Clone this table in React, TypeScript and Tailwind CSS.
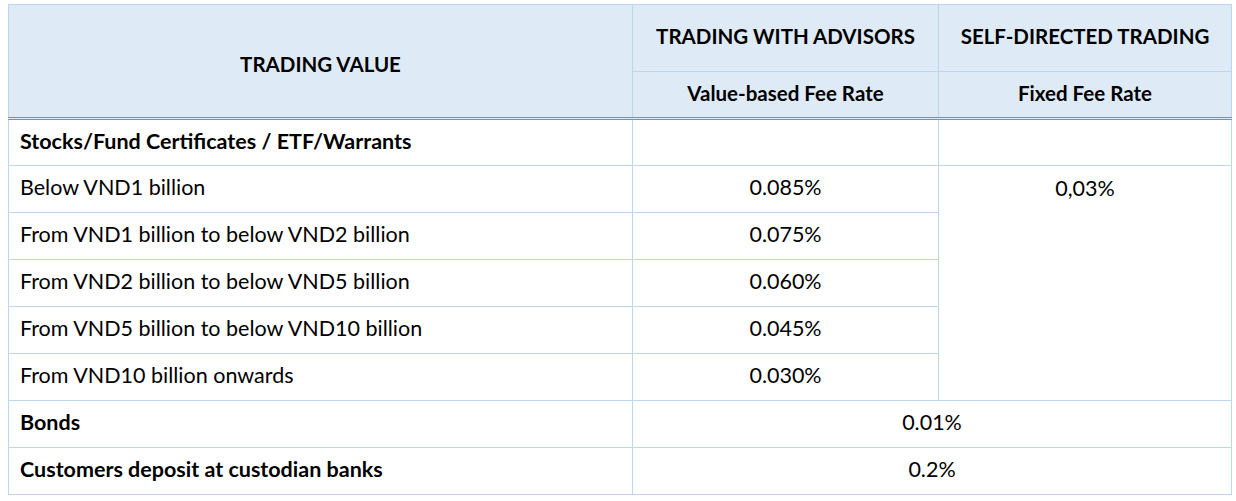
import React from "react";

const rates = [
  { label: "Below VND1 billion", value: "0.085%" },
  { label: "From VND1 billion to below VND2 billion", value: "0.075%" },
  { label: "From VND2 billion to below VND5 billion", value: "0.060%" },
  { label: "From VND5 billion to below VND10 billion", value: "0.045%" },
  { label: "From VND10 billion onwards", value: "0.030%" },
];

const cell = "border border-[#bdd6ee] h-[47px] align-middle pb-[3px]";

const App: React.FC = () => {
  return (
    <div
      className="bg-white w-[1236px] h-[501px] pt-[4px] pl-[8px] text-[21.5px] text-black"
      style={{ fontFamily: "Lato, 'Open Sans', sans-serif" }}
    >
      <table className="border-collapse w-[1223px] table-fixed">
        <colgroup>
          <col className="w-[624px]" />
          <col className="w-[306px]" />
          <col className="w-[293px]" />
        </colgroup>
        <thead className="bg-[#deeaf6] text-[20.5px]">
          <tr>
            <th
              rowSpan={2}
              className="border border-double border-[#bdd6ee] border-b-[3px] border-b-[#5b9bd5] text-center font-bold pt-[6px]"
            >
              TRADING VALUE
            </th>
            <th className="border border-[#bdd6ee] h-[67px] text-center font-bold pb-[4px]">
              TRADING WITH ADVISORS
            </th>
            <th className="border border-[#bdd6ee] h-[67px] text-center font-bold pb-[4px]">
              SELF-DIRECTED TRADING
            </th>
          </tr>
          <tr>
            <th className="border border-double border-[#bdd6ee] border-b-[3px] border-b-[#5b9bd5] h-[47px] text-center font-bold pb-[3px]">
              Value-based Fee Rate
            </th>
            <th className="border border-double border-[#bdd6ee] border-b-[3px] border-b-[#5b9bd5] h-[47px] text-center font-bold pb-[3px]">
              Fixed Fee Rate
            </th>
          </tr>
        </thead>
        <tbody>
          <tr>
            <td className={`${cell} pl-[11px] font-bold`}>Stocks/Fund Certificates / ETF/Warrants</td>
            <td className={cell}></td>
            <td className={cell}></td>
          </tr>
          {rates.map((r, i) => (
            <tr key={r.label}>
              <td className={`${cell} pl-[11px]`}>{r.label}</td>
              <td className={`${cell} text-center`}>{r.value}</td>
              {i === 0 && (
                <td rowSpan={5} className="border border-[#bdd6ee] align-top text-center pt-[6px]">
                  0,03%
                </td>
              )}
            </tr>
          ))}
          <tr>
            <td className={`${cell} pl-[11px] font-bold`}>Bonds</td>
            <td colSpan={2} className={`${cell} text-center`}>0.01%</td>
          </tr>
          <tr>
            <td className={`${cell} pl-[11px] font-bold`}>Customers deposit at custodian banks</td>
            <td colSpan={2} className={`${cell} text-center`}>0.2%</td>
          </tr>
        </tbody>
      </table>
    </div>
  );
};

export default App;
